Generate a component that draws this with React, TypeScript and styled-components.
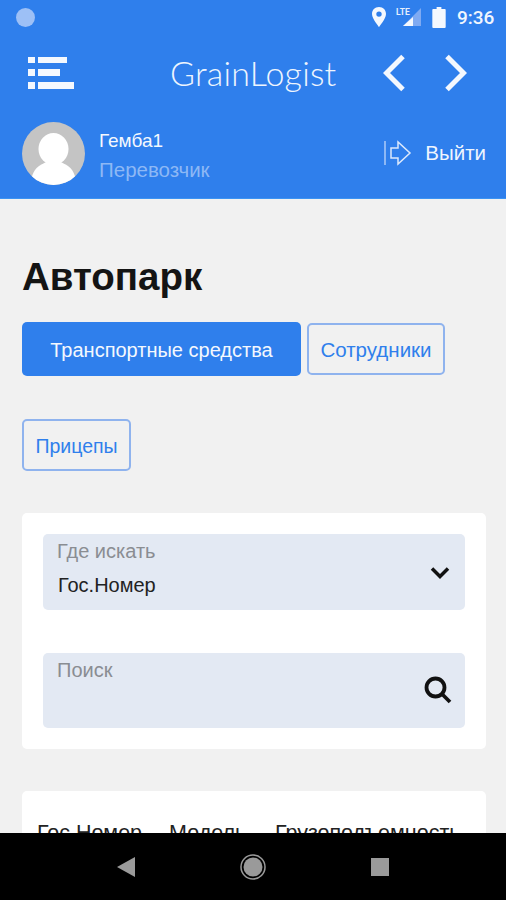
import styled, { createGlobalStyle } from "styled-components";

const Global = createGlobalStyle`
  html, body {
    margin: 0;
    padding: 0;
    background: #f1f1f1;
  }
  * {
    box-sizing: border-box;
  }
`;

const Screen = styled.div`
  width: 506px;
  height: 900px;
  display: flex;
  flex-direction: column;
  overflow: hidden;
  font-family: "Liberation Sans", Arial, sans-serif;
  background: #f1f1f1;
`;

const Header = styled.header`
  height: 199px;
  flex: none;
  background: #2f7fec;
  border-bottom: 1px solid #3b93f3;
`;

const StatusBar = styled.div`
  height: 33px;
  display: flex;
  align-items: center;
  padding: 1px 11px 0 16px;
`;

const StatusDot = styled.div`
  width: 19px;
  height: 19px;
  border-radius: 50%;
  background: #9dc0f6;
  margin-right: auto;
`;

const StatusIcons = styled.div`
  display: flex;
  align-items: center;
`;

const Clock = styled.span`
  margin-left: 11px;
  width: 38px;
  font-family: Roboto, sans-serif;
  font-weight: 500;
  font-size: 19px;
  color: #f1f6fe;
`;

const TitleBar = styled.div`
  height: 77px;
  display: flex;
  align-items: center;
  padding: 2px 39px 0 28px;
`;

const AppName = styled.div`
  margin-left: 96px;
  width: 167px;
  font-family: Lato, sans-serif;
  font-weight: 300;
  font-size: 34px;
  letter-spacing: 0.2px;
  color: #eef5fe;
  white-space: nowrap;
`;

const ArrowButtons = styled.div`
  margin-left: auto;
  display: flex;
  gap: 40px;
`;

const UserRow = styled.div`
  display: flex;
  align-items: center;
  padding: 12px 20px 0 22px;
`;

const Avatar = styled.svg`
  width: 63px;
  height: 63px;
  flex: none;
`;

const UserInfo = styled.div`
  margin-left: 14px;
  padding-top: 2px;
  display: flex;
  flex-direction: column;
  gap: 8px;
  margin-right: auto;
`;

const UserName = styled.div`
  font-size: 19px;
  line-height: 21px;
  color: #f4f8fe;
`;

const UserRole = styled.div`
  font-size: 20.5px;
  line-height: 21px;
  color: #8db8f5;
`;

const Logout = styled.div`
  display: flex;
  align-items: center;
  gap: 13px;
  padding-bottom: 1px;
  font-size: 20.5px;
  color: #eef5fe;
`;

const Main = styled.main`
  flex: 1;
  min-height: 0;
  overflow: hidden;
  padding: 0 20px 0 22px;
`;

const PageTitle = styled.h1`
  margin: 56px 0 0;
  font-size: 38.5px;
  line-height: 44px;
  font-weight: 700;
  color: #141414;
`;

const Tabs = styled.div`
  margin-top: 23px;
  display: flex;
  flex-wrap: wrap;
  align-items: center;
  column-gap: 6px;
  row-gap: 43px;
`;

const Tab = styled.div<{ $active?: boolean; $width: number; $size: number }>`
  height: ${(p) => (p.$active ? "54px" : "52px")};
  width: ${(p) => p.$width}px;
  display: flex;
  align-items: center;
  justify-content: center;
  padding-top: 2px;
  border-radius: 5px;
  font-size: ${(p) => p.$size}px;
  color: ${(p) => (p.$active ? "#f4f8fe" : "#2f7fec")};
  background: ${(p) => (p.$active ? "#2f7fec" : "transparent")};
  border: ${(p) => (p.$active ? "none" : "2px solid #8fb3ee")};
`;

const Card = styled.section`
  margin-top: 42px;
  padding: 21px;
  background: #fff;
  border-radius: 5px;
`;

const SearchCard = styled(Card)`
  display: flex;
  flex-direction: column;
  gap: 43px;
`;

const Field = styled.div`
  height: 75.5px;
  position: relative;
  padding: 6px 14px 0;
  background: #e3e9f3;
  border-radius: 5px;
`;

const FieldLabel = styled.div`
  font-size: 20px;
  line-height: 23px;
  color: #8a8d92;
`;

const FieldValue = styled.div`
  margin-top: 11px;
  padding-left: 1px;
  font-size: 20px;
  line-height: 22px;
  color: #222;
`;

const FieldIcon = styled.svg<{ $right: number }>`
  position: absolute;
  right: ${(p) => p.$right}px;
  top: 50%;
  transform: translateY(-50%);
`;

const TableCard = styled(Card)`
  height: 120px;
  padding: 30px 15px 0;
`;

const TableHead = styled.div`
  display: flex;
  font-size: 21.5px;
  line-height: 24px;
  color: #222;
  white-space: nowrap;
`;

const HeadCell = styled.div<{ $width: number }>`
  width: ${(p) => p.$width}px;
  flex: none;
`;

const NavBar = styled.nav`
  height: 67px;
  flex: none;
  background: #000;
  display: flex;
  align-items: center;
  padding: 0 117px;
  justify-content: space-between;
`;

export default function App() {
  return (
    <Screen>
      <Global />
      <Header>
        <StatusBar>
          <StatusDot />
          <StatusIcons>
            <svg width="16" height="20" viewBox="0 0 16 20" style={{ marginRight: 7 }}>
              <path
                fillRule="evenodd"
                d="M8 0C3.700 0 1 3.200 1 7c0 4.600 7 13 7 13s7-8.400 7-13c0-3.800-2.700-7-7-7zm0 4.400a2.700 2.700 0 1 1 0 5.400 2.700 2.700 0 0 1 0-5.400z"
                fill="#f4f8fe"
              />
            </svg>
            <svg width="27" height="22" viewBox="0 0 27 22" style={{ marginRight: 11 }}>
              <path d="M27 2v18H9z" fill="#7faaf2" />
              <path d="M19 11v9H9z" fill="#f4f8fe" />
              <text x="2" y="9" fontFamily="Roboto, sans-serif" fontSize="8.500" fontWeight="700" fill="#e4eefd">
                LTE
              </text>
            </svg>
            <svg width="14" height="21" viewBox="0 0 14 22">
              <path d="M4.500 0h5v2H13a1 1 0 0 1 1 1v18a1 1 0 0 1-1 1H1a1 1 0 0 1-1-1V3a1 1 0 0 1 1-1h3.500z" fill="#f4f8fe" />
            </svg>
            <Clock>9:36</Clock>
          </StatusIcons>
        </StatusBar>
        <TitleBar>
          <svg width="46" height="32" viewBox="0 0 46 32" fill="#f4f8fe">
            <rect x="0" y="0" width="7" height="6" />
            <rect x="10" y="0" width="29" height="6" />
            <rect x="0" y="12" width="7" height="7" />
            <rect x="10" y="12" width="22" height="7" />
            <rect x="0" y="25" width="7" height="7" />
            <rect x="10" y="25" width="36" height="7" />
          </svg>
          <AppName>GrainLogist</AppName>
          <ArrowButtons>
            <svg width="22" height="38" viewBox="0 0 22 38" fill="none" stroke="#f4f8fe" strokeWidth="5">
              <path d="M20 2.500 3.500 19 20 35.500" />
            </svg>
            <svg width="22" height="38" viewBox="0 0 22 38" fill="none" stroke="#f4f8fe" strokeWidth="5">
              <path d="M2 2.500 18.500 19 2 35.500" />
            </svg>
          </ArrowButtons>
        </TitleBar>
        <UserRow>
          <Avatar viewBox="0 0 63 63">
            <defs>
              <clipPath id="avatar-clip">
                <circle cx="31.500" cy="31.500" r="31.500" />
              </clipPath>
            </defs>
            <circle cx="31.500" cy="31.500" r="31.500" fill="#c4c4c4" />
            <g clipPath="url(#avatar-clip)" fill="#fff">
              <ellipse cx="31.500" cy="27" rx="15" ry="16" />
              <path d="M9 63c0-6 1-14 8-19 3-2 7-4 9-5h11c2 1 6 3 9 5 7 5 8 13 8 19z" />
            </g>
          </Avatar>
          <UserInfo>
            <UserName>Гемба1</UserName>
            <UserRole>Перевозчик</UserRole>
          </UserInfo>
          <Logout>
            <svg width="28" height="26" viewBox="0 0 28 26" fill="none" strokeWidth="1.500">
              <path d="M1 1v24" stroke="#8db8f5" strokeWidth="2" />
              <path d="M7 8h7V2l12 11-12 11v-6H7z" stroke="#dce9fc" />
            </svg>
            Выйти
          </Logout>
        </UserRow>
      </Header>
      <Main>
        <PageTitle>Автопарк</PageTitle>
        <Tabs>
          <Tab $active $width={279} $size={20}>
            Транспортные средства
          </Tab>
          <Tab $width={138} $size={20.5}>
            Сотрудники
          </Tab>
          <Tab $width={109} $size={19.5}>
            Прицепы
          </Tab>
        </Tabs>
        <SearchCard>
          <Field>
            <FieldLabel>Где искать</FieldLabel>
            <FieldValue>Гос.Номер</FieldValue>
            <FieldIcon $right={15} width="20" height="15" viewBox="0 0 20 15" fill="none" stroke="#111" strokeWidth="3.500">
              <path d="M2 4l8 8 8-8" />
            </FieldIcon>
          </Field>
          <Field>
            <FieldLabel>Поиск</FieldLabel>
            <FieldIcon $right={13} width="28" height="28" viewBox="0 0 28 28" fill="none" stroke="#111" strokeWidth="3.800">
              <circle cx="11.500" cy="11.500" r="9" />
              <path d="M18 18l8 8" />
            </FieldIcon>
          </Field>
        </SearchCard>
        <TableCard>
          <TableHead>
            <HeadCell $width={132}>Гос.Номер</HeadCell>
            <HeadCell $width={106}>Модель</HeadCell>
            <HeadCell $width={190}>Грузоподъемность</HeadCell>
          </TableHead>
        </TableCard>
      </Main>
      <NavBar>
        <svg width="18" height="20" viewBox="0 0 18 20">
          <path d="M18 0v20L0 10z" fill="#9a9a9a" />
        </svg>
        <svg width="26" height="26" viewBox="0 0 26 26">
          <circle cx="13" cy="13" r="12" fill="none" stroke="#9a9a9a" strokeWidth="1.500" />
          <circle cx="13" cy="13" r="9.500" fill="#9a9a9a" />
        </svg>
        <svg width="18" height="18" viewBox="0 0 18 18">
          <rect width="18" height="18" fill="#9a9a9a" />
        </svg>
      </NavBar>
    </Screen>
  );
}
